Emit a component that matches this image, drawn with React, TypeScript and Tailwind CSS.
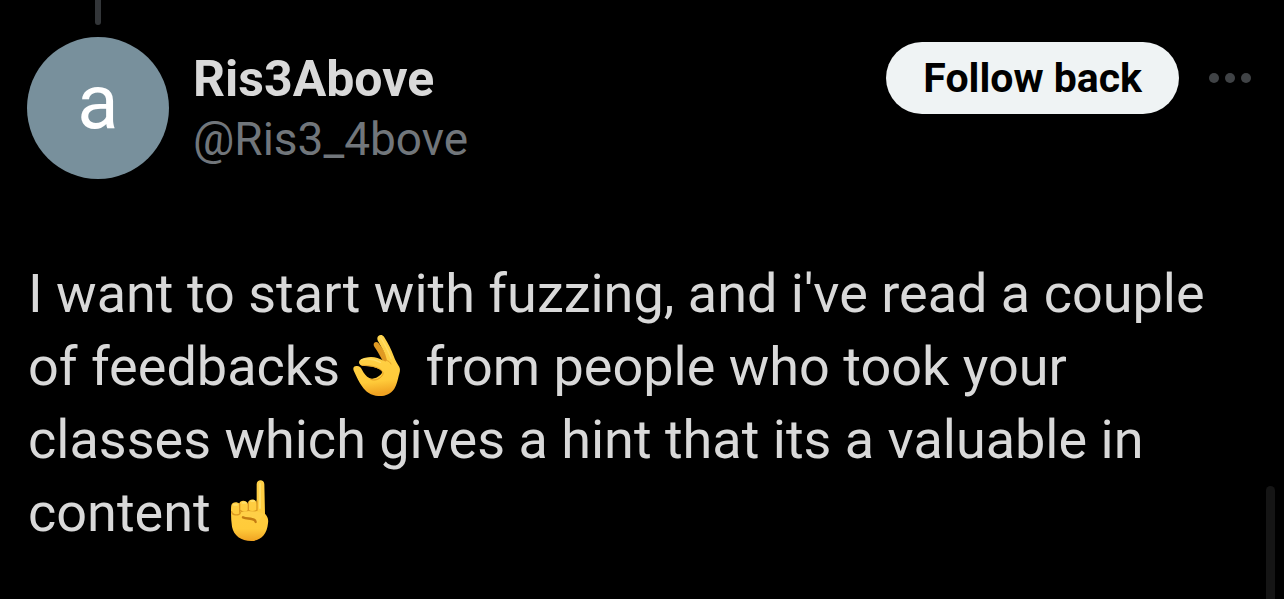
function OkHand() {
  return (
    <svg role="img" aria-label="OK hand" viewBox="12 24 192 192" className="mx-1 -my-2 inline-block size-16 align-[-4px]">
      <defs>
        <linearGradient id="okSkin" x1="0" y1="0" x2="0.1" y2="1">
          <stop offset="0" stopColor="#ffd650" />
          <stop offset="0.8" stopColor="#ffcb3a" />
          <stop offset="1" stopColor="#f0a322" />
        </linearGradient>
      </defs>
      <path d="M101 59c0-8 9-11 15-4 11 13 20 28 27 46l-4 22c-11-12-19-33-35-56-2-3-3-5-3-8z" fill="#e09a22" />
      <path
        fillRule="evenodd"
        d="M112 40c0-11 14-14 20-5 13 20 22 38 29 58 5 14 11 23 17 33 4 8 1 17-2 27-3 12-6 27-13 38-11 16-27 23-48 22-22-1-38-12-49-29-9-13-16-28-23-43-5-10-4-17 6-18 8-1 14 4 17 11 6 12 13 20 22 25 9 5 23 0 32-8 8-7 8-13 1-17-15-8-31-11-47-11-11 0-17-4-17-11 1-9 9-11 19-14 20-5 38-1 55 9 5 3 9 3 10-1-2-9-6-20-11-30-6-11-12-20-16-28-1-2-2-4-2-7z"
        fill="url(#okSkin)"
      />
      <path d="M122 135c9 5 9 12 3 19-9 10-22 14-33 9" fill="none" stroke="#e29a20" strokeWidth="3" strokeLinecap="round" />
      <path d="M66 121c22 0 42 3 57 13" fill="none" stroke="#e9a629" strokeWidth="3" strokeLinecap="round" />
      <path d="M139 106c8 2 12 6 14 11" fill="none" stroke="#e9a629" strokeWidth="3" strokeLinecap="round" />
      <path d="M122 37c13 22 25 43 31 63M65 104c17-4 37-2 56 8" fill="none" stroke="#ffde68" strokeWidth="4" strokeLinecap="round" />
    </svg>
  );
}

function PointingUp() {
  return (
    <svg role="img" aria-label="Index pointing up" viewBox="0 30 192 192" className="-my-2 mr-1 ml-2 inline-block size-16 align-[-4px]">
      <defs>
        <linearGradient id="pointSkin" x1="0" y1="0" x2="0" y2="1">
          <stop offset="0" stopColor="#ffd047" />
          <stop offset="0.8" stopColor="#ffcb3a" />
          <stop offset="1" stopColor="#f0a322" />
        </linearGradient>
      </defs>
      <path d="M113 46c0-16 23-16 23 0l2 88c8 8 11 17 9 29-3 32-21 53-50 53-31 0-53-17-58-43-2-14-3-28-3-41 0-10 0-18 1-23 2-11 18-12 24-5 1-12 22-12 25 0 3-18 27-16 27 0z" fill="url(#pointSkin)" />
      <path d="M62 105v25M88 101v22M114 96v28M38 128c1 12 22 13 26 3M64 124c5 7 20 6 24 0 6 5 17 6 25 0" fill="none" stroke="#dc9a22" strokeWidth="4" strokeLinecap="round" />
      <path d="M66 139c-3-8 5-13 14-12 19 1 42-2 57 9-12 7-16 22-23 26-4-9-14-12-27-12-12 0-19-3-21-11z" fill="#ffd047" />
      <path d="M72 145c9 4 18 3 26 5 8 1 12 4 12 9" fill="none" stroke="#c47c12" strokeWidth="7" strokeLinecap="round" />
      <path d="M123 44v73M45 107h9M71 101h9M97 96h8" fill="none" stroke="#ffde68" strokeWidth="6" strokeLinecap="round" />
    </svg>
  );
}

export default function App() {
  return (
    <main className="relative min-h-screen overflow-hidden bg-black font-['Roboto','Open_Sans',sans-serif] text-[#d9d9d9]">
      <article className="pr-[33px] pl-7">
        <header className="flex items-start">
          <div className="-ml-px flex shrink-0 flex-col items-center gap-3">
            <div className="h-[25px] w-1.5 rounded-b-full bg-[#333639]" />
            <div className="flex size-[142px] items-center justify-center rounded-full bg-[#78909c] pb-3 text-[76px] leading-none text-white">
              a
            </div>
          </div>
          <div className="mt-[49px] ml-6 min-w-0 flex-1 leading-[60px]">
            <h1 className="text-[50px] font-bold">Ris3Above</h1>
            <p className="text-[46px] text-[#71767b]">@Ris3_4bove</p>
          </div>
          <div className="mt-[42px] flex shrink-0 items-center gap-[30px]">
            <button type="button" className="h-[72px] rounded-full bg-[#eff3f4] px-[37px] pt-1 pb-0.5 text-[41px] font-bold text-black">
              Follow back
            </button>
            <button type="button" aria-label="More" className="flex gap-[6px]">
              <span className="size-[10px] rounded-full bg-[#404346]" />
              <span className="size-[10px] rounded-full bg-[#404346]" />
              <span className="size-[10px] rounded-full bg-[#404346]" />
            </button>
          </div>
        </header>
        <p className="mt-[78px] text-[54px] leading-[73px]">
          I want to start with fuzzing, and i've read a couple of feedbacks
          <OkHand /> from people who took your classes which gives a hint that its a valuable in content
          <PointingUp />
        </p>
      </article>
      <div className="absolute top-[486px] right-[9px] bottom-0 w-[9px] rounded-t-full bg-[#151515]" />
    </main>
  );
}
